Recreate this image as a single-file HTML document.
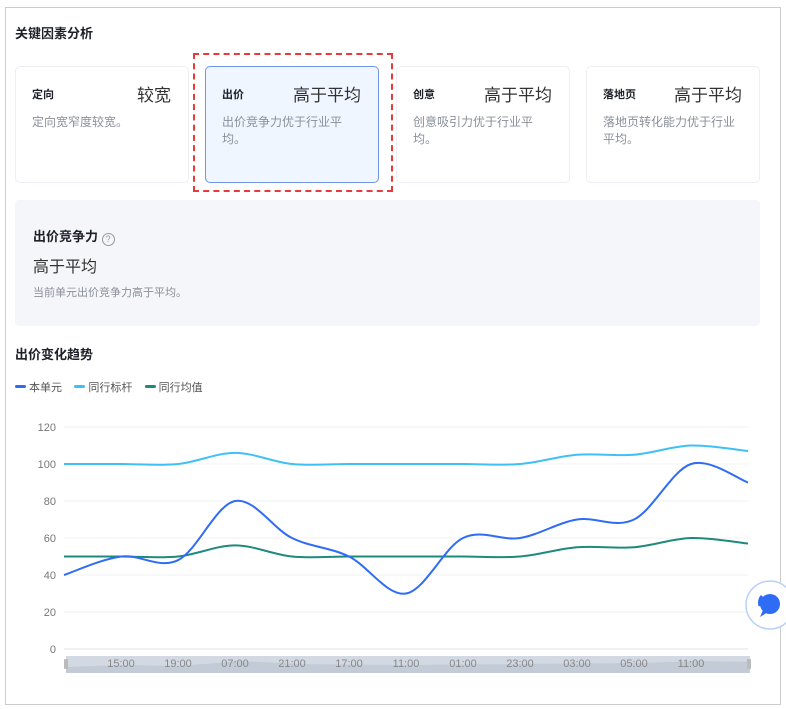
<!DOCTYPE html>
<html><head><meta charset="utf-8"><style>
*{margin:0;padding:0;box-sizing:border-box}
body{width:786px;height:709px;background:#fff;font-family:"Liberation Sans","Noto Sans CJK SC",sans-serif;position:relative;overflow:hidden;color:#1d2129}
.a{position:absolute}
.frame{left:5px;top:7px;width:776px;height:698px;border:1px solid #ccc}
.card{border:1.5px solid #eceef3;border-radius:5px;background:#fff;width:174px;height:117px;top:66px}
.card .t{position:absolute;left:16px;top:19px;font-size:11px;font-weight:bold;color:#1d2129}
.card .v{position:absolute;right:17px;top:14px;font-size:17px;color:#333}
.card .d{position:absolute;left:16px;top:47px;width:140px;font-size:12px;line-height:17px;color:#8a8f99}
.sel{background:#f0f6ff;border:1.5px solid #6f95e8}
</style></head><body>
<div class="a frame"></div>
<div class="a" style="left:15px;top:23px;font-size:13px;font-weight:bold">关键因素分析</div>
<div class="a card" style="left:15px"><div class="t">定向</div><div class="v">较宽</div><div class="d">定向宽窄度较宽。</div></div>
<div class="a card sel" style="left:205px"><div class="t">出价</div><div class="v">高于平均</div><div class="d">出价竞争力优于行业平均。</div></div>
<div class="a card" style="left:396px"><div class="t">创意</div><div class="v">高于平均</div><div class="d">创意吸引力优于行业平均。</div></div>
<div class="a card" style="left:586px"><div class="t">落地页</div><div class="v">高于平均</div><div class="d">落地页转化能力优于行业平均。</div></div>
<div class="a" style="left:193px;top:53px;width:200px;height:139px;border:2px dashed #e83a3a"></div>
<div class="a" style="left:15px;top:200px;width:745px;height:126px;background:#f5f6fa;border-radius:4px"></div>
<div class="a" style="left:33px;top:226px;font-size:13px;font-weight:bold">出价竞争力 <span style="display:inline-block;width:13px;height:13px;border:1px solid #999;border-radius:50%;font-size:9px;line-height:11px;text-align:center;color:#999;font-weight:normal;vertical-align:-1px">?</span></div>
<div class="a" style="left:33px;top:253px;font-size:16px;color:#333">高于平均</div>
<div class="a" style="left:33px;top:284px;font-size:11px;color:#8a8f99">当前单元出价竞争力高于平均。</div>
<div class="a" style="left:15px;top:344px;font-size:13px;font-weight:bold">出价变化趋势</div>
<div class="a" style="left:15px;top:379px;font-size:11px;color:#555;white-space:nowrap">
<span style="display:inline-block;width:11px;height:3px;border-radius:2px;background:#2f6cf6;vertical-align:3px"></span> 本单元&nbsp;&nbsp;&nbsp;
<span style="display:inline-block;width:11px;height:3px;border-radius:2px;background:#3fc0f5;vertical-align:3px"></span> 同行标杆&nbsp;&nbsp;&nbsp;
<span style="display:inline-block;width:11px;height:3px;border-radius:2px;background:#1e8a7c;vertical-align:3px"></span> 同行均值</div>
<svg class="a" style="left:0;top:0" width="786" height="709" id="c">
<g stroke="#eef0f3" stroke-width="1">
<line x1="64" x2="748" y1="427" y2="427"/><line x1="64" x2="748" y1="464" y2="464"/><line x1="64" x2="748" y1="501" y2="501"/><line x1="64" x2="748" y1="538" y2="538"/><line x1="64" x2="748" y1="575" y2="575"/><line x1="64" x2="748" y1="612" y2="612"/></g>
<line x1="64" x2="748" y1="649" y2="649" stroke="#dde0e6"/>
<g font-size="11" fill="#777" text-anchor="end" font-family="Liberation Sans">
<text x="56" y="431">120</text><text x="56" y="468">100</text><text x="56" y="505">80</text><text x="56" y="542">60</text><text x="56" y="579">40</text><text x="56" y="616">20</text><text x="56" y="653">0</text></g>
<rect x="66" y="656" width="684" height="17" fill="#d3d9e2"/>
<path d="M66 667 L120 665 L180 666 L240 661 L300 664 L400 665 L520 664 L640 663 L700 661 L750 662 L750 673 L66 673Z" fill="#c3cbd7"/>
<rect x="64" y="659" width="4" height="10" fill="#bbb" rx="1"/><rect x="747" y="659" width="4" height="10" fill="#bbb" rx="1"/>
<g font-size="11" fill="#888" text-anchor="middle" font-family="Liberation Sans" id="xl"></g>
<path id="p2" fill="none" stroke="#3fc0f5" stroke-width="2"/>
<path id="p3" fill="none" stroke="#1e8a7c" stroke-width="2"/>
<path id="p1" fill="none" stroke="#2f6cf6" stroke-width="2"/>
<circle cx="770" cy="605" r="24" fill="#fff" stroke="#b8d0f5" stroke-width="1.5"/>
<circle cx="770" cy="604" r="10" fill="#2f6cf6"/><path d="M763 610 L760 617 L768 612Z" fill="#2f6cf6"/>
<path d="M760 606 a11 11 0 0 1 2 -10" stroke="#2f6cf6" stroke-width="3" fill="none"/>
</svg>
<script>
var L=["15:00","19:00","07:00","21:00","17:00","11:00","01:00","23:00","03:00","05:00","11:00"];
var g=document.getElementById('xl'),h='';
L.forEach(function(t,i){h+='<text x="'+(121+57*i)+'" y="667">'+t+'</text>'});g.innerHTML=h;
function path(v){var p=v.map(function(y,i){return [64+57*i,649-y*1.85]});var d='M'+p[0][0]+' '+p[0][1];
for(var i=0;i<p.length-1;i++){var a=p[i-1]||p[i],b=p[i],c=p[i+1],e=p[i+2]||c;
d+=' C'+(b[0]+(c[0]-a[0])/6)+' '+(b[1]+(c[1]-a[1])/6)+' '+(c[0]-(e[0]-b[0])/6)+' '+(c[1]-(e[1]-b[1])/6)+' '+c[0]+' '+c[1];}return d}
document.getElementById('p1').setAttribute('d',path([40,50,48,80,60,50,30,60,60,70,70,100,90]));
document.getElementById('p2').setAttribute('d',path([100,100,100,106,100,100,100,100,100,105,105,110,107]));
document.getElementById('p3').setAttribute('d',path([50,50,50,56,50,50,50,50,50,55,55,60,57]));
</script>
</body></html>
